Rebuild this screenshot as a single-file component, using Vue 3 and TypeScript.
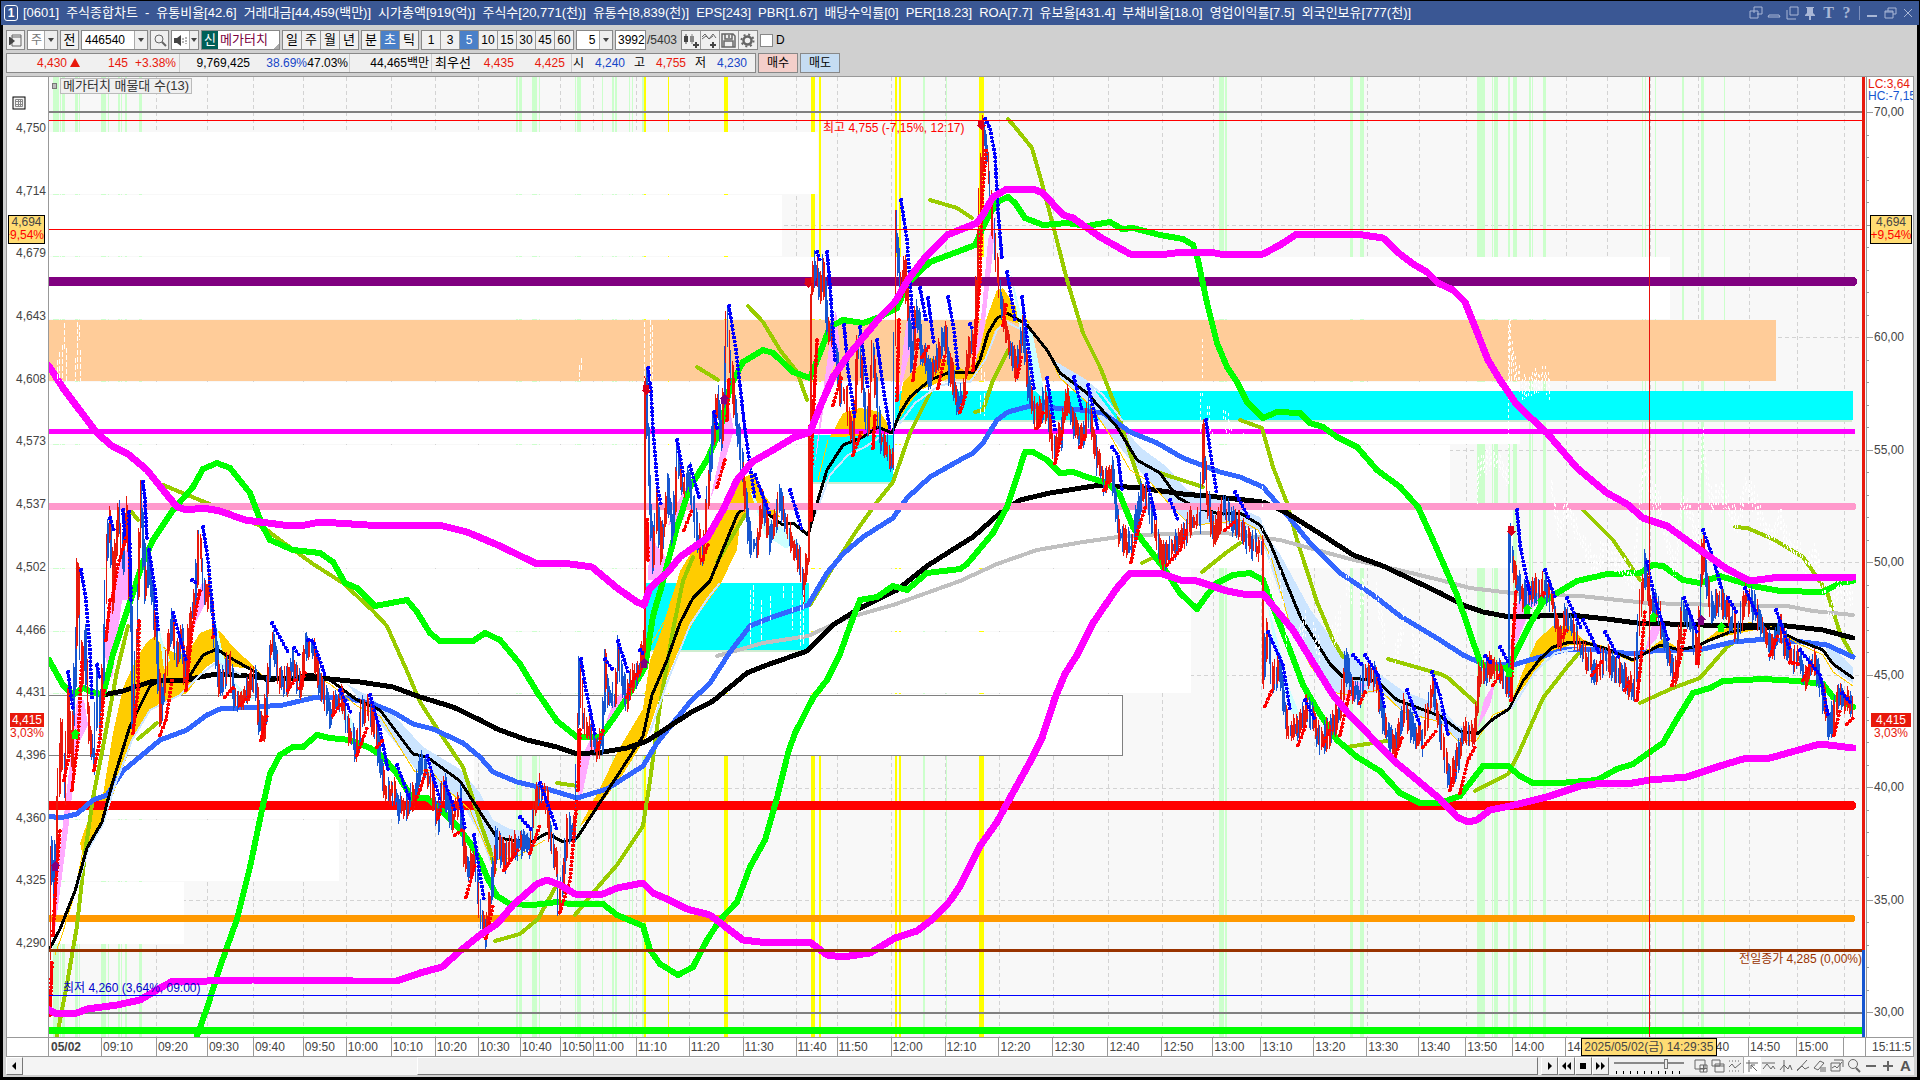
<script setup lang="ts">
import { computed, ref } from 'vue'

interface Stripe { x: number; w: number; c?: string }
interface Line { c: string; w: number; pts: string }

const titleParts = [
  '[0601]', '주식종합차트', '-', '유통비율[42.6]', '거래대금[44,459(백만)]', '시가총액[919(억)]',
  '주식수[20,771(천)]', '유통수[8,839(천)]', 'EPS[243]', 'PBR[1.67]', '배당수익률[0]', 'PER[18.23]',
  'ROA[7.7]', '유보율[431.4]', '부채비율[18.0]', '영업이익률[7.5]', '외국인보유[777(천)]',
]
const periods = ['일', '주', '월', '년']
const units = ['분', '초', '틱']
const counts = ['1', '3', '5', '10', '15', '30', '45', '60']
const unit = ref('초')
const count = ref('5')
const showD = ref(false)
const zoomLevel = ref(75)

const priceLabels = ['4,750', '4,714', '4,679', '4,643', '4,608', '4,573', '4,537', '4,502', '4,466', '4,431', '4,396', '4,360', '4,325', '4,290']
const percentLabels = ['70,00', '', '60,00', '55,00', '50,00', '45,00', '40,00', '35,00', '30,00']

/* time axis: start position of every label cell */
const times: [number, string][] = [
  [49, '05/02'], [101, '09:10'], [156, '09:20'], [207, '09:30'], [253, '09:40'], [303, '09:50'], [346, '10:00'],
  [391, '10:10'], [435, '10:20'], [478, '10:30'], [520, '10:40'], [560, '10:50'], [593, '11:00'], [636, '11:10'],
  [689, '11:20'], [743, '11:30'], [796, '11:40'], [837, '11:50'], [891, '12:00'], [945, '12:10'], [999, '12:20'],
  [1053, '12:30'], [1108, '12:40'], [1162, '12:50'], [1213, '13:00'], [1261, '13:10'], [1314, '13:20'], [1367, '13:30'],
  [1419, '13:40'], [1466, '13:50'], [1513, '14:00'], [1566, '14:10'], [1607, ''], [1650, ''], [1698, '14:40'],
  [1749, '14:50'], [1797, '15:00'], [1844, ''],
]
const timeColumns = computed(() =>
  times.map(([x], i) => `${(i + 1 < times.length ? times[i + 1][0] : 1866) - x}fr`).join(' '))
const gridX = times.slice(1).map(([x]) => x + 0.5)
const gridY = [225.5, 337.5, 450.5, 562.5, 675.5, 788.5, 900.5]
const minorTicks = Array.from({ length: 41 }, (_, i) => ({ y: 112.5 + i * 22.5, major: i % 5 === 0 }))

const stripes: Stripe[] = [
  [53, 6], [60, 1], [62, 3], [75, 3], [79, 1], [101, 5], [108, 1], [118, 2], [121, 1], [125, 2], [139, 3], [516, 2],
  [519, 3], [532, 5], [539, 1], [575, 1], [577, 4], [602, 1], [612, 2], [615, 2], [629, 1], [632, 1], [642, 2],
  [923, 2], [946, 1], [1219, 5], [1225, 2], [1350, 3], [1360, 4], [1477, 8], [1492, 1], [1494, 4], [1508, 2],
  [1513, 4], [1529, 2], [1532, 1], [1543, 3], [1642, 1], [1645, 1], [1655, 1], [1682, 2], [1701, 3], [1724, 1],
].map(([x, w]) => ({ x, w, c: '#cfc' }))
const yellow: Stripe[] = [[644, 2], [668, 1], [724, 4], [811, 4], [819, 2], [895, 2], [899, 2], [979, 5]].map(([x, w]) => ({ x, w, c: '#ff0' }))

/* volume profile rows: top, height, right edge */
const profile = [
  [132, 62, 818], [195, 61, 782], [257, 62, 1670], [382, 62, 1520], [445, 61, 1450], [507, 61, 1513],
  [569, 62, 1191], [632, 61, 1191], [756, 63, 474], [820, 61, 339], [882, 62, 184],
]

const levels = [
  { y: 281.5, w: 9, c: '#800080', x: 1853 }, { y: 431.5, w: 5, c: '#f0f', x: 1853 },
  { y: 506.5, w: 7, c: '#f9c', x: 1853 }, { y: 805.5, w: 9, c: '#f00', x: 1852 },
  { y: 918.5, w: 7, c: '#f90', x: 1852 },
]

const goldBands = [
  '80,843 90,815 103,795 113,733 123,688 137,657 147,642 155,636 163,647 177,654 187,654 200,633 213,628 221,632 233,647 257,669 233,667 217,660 205,668 187,693 167,700 150,709 133,740 113,795 100,829 83,857',
  '580,826 600,788 620,747 643,709 650,660 667,616 680,571 693,550 713,527 727,503 740,480 753,473 763,493 780,517 763,512 750,508 740,523 737,550 720,585 697,616 680,647 663,688 647,736 623,774 597,809',
  '830,437 843,413 860,408 880,412 892,430 878,428 863,436',
  '897,423 903,383 917,367 930,358 947,360 967,372 980,350 987,317 997,290 1003,288 1013,303 1030,323 1023,325 1007,320 995,330 982,367 973,380 950,378 920,390 907,407',
  '1509,707 1523,671 1537,640 1553,626 1570,626 1583,640 1607,647 1570,645 1550,652 1523,688',
  '1650,648 1663,639 1677,647 1663,648', '1703,642 1717,631 1750,622 1770,627 1730,635',
]
const blueBands = [
  '347,684 370,697 393,714 423,747 440,757 460,769 480,793 493,820 510,829 533,833 533,842 505,856 490,862 480,835 460,800 420,775 393,740',
  '1053,360 1087,380 1117,420 1140,447 1167,467 1187,490 1220,500 1260,517 1270,540 1280,554 1310,609 1340,650 1370,667 1403,691 1440,705 1457,726 1477,727 1477,738 1457,740 1440,722 1403,712 1380,692 1350,695 1330,692 1310,665 1290,625 1272,570 1258,530 1220,523 1190,525 1170,505 1150,482 1130,460 1110,435 1090,405 1060,378',
  '1823,640 1837,652 1853,667 1853,683 1840,675 1830,660',
]
const pinkBands = [
  '53,945 60,850 68,780 77,700 84,700 88,725 78,745 68,830', '103,650 112,590 122,556 130,545 133,600 122,600 112,680',
  '188,650 196,600 203,580 207,600 196,622', '577,810 580,760 590,740 603,744 590,758 583,790', '604,728 614,700 628,688 640,670 624,700',
  '648,580 650,520 656,545 668,560 662,580', '668,525 676,505 690,480 684,520', '710,500 720,455 728,400 734,430 722,470',
  '814,470 822,400 830,340 836,310 840,350 828,380', '898,400 904,340 910,300 918,330 908,360', '972,375 982,310 988,240 996,216 992,260 984,330',
  '1510,650 1514,610 1524,590 1545,598 1530,610 1518,640', '1645,650 1652,625 1664,620 1656,640', '1477,730 1484,700 1496,680 1490,705', '1344,700 1352,680 1366,685 1356,700',
]
const cyanBands = [
  '156,610 162,640 170,660 164,670', '214,612 222,650 228,672 220,668', '750,490 765,515 785,530 800,545 785,548 765,535', '1010,270 1020,310 1032,330 1040,370 1046,400 1036,392 1022,345',
  '1267,600 1280,650 1290,690 1300,715 1292,714 1278,670', '338,700 350,715 358,738 348,735', '232,680 245,692 255,698 245,702', '1826,690 1834,712 1832,722',
]

const lines: Line[] = [
  { c: '#c0c0c0', w: 4, pts: '717,656 763,643 808,636 847,618 893,605 960,581 997,564 1037,550 1083,542 1125,536 1163,534 1225,533 1280,540 1350,559 1403,571 1440,580 1470,588 1520,594 1580,596 1647,603 1720,605 1787,606 1813,611 1853,615' },
  { c: '#36f', w: 5, pts: '49,816 60,818 77,814 93,800 107,795 123,771 147,751 160,740 187,730 207,715 220,709 257,707 283,705 317,697 347,698 373,704 393,712 413,724 433,729 463,743 480,757 493,772 517,782 547,789 577,798 607,789 643,766 657,743 690,702 710,683 730,652 750,626 770,618 808,605 827,573 843,554 863,537 893,518 907,498 930,477 960,460 973,453 983,443 997,420 1008,412 1030,406 1080,410 1103,413 1130,432 1157,443 1183,458 1220,472 1240,477 1263,487 1283,510 1310,543 1340,573 1373,595 1400,616 1440,640 1463,655 1483,664 1513,665 1540,657 1567,649 1587,649 1633,654 1653,651 1703,649 1733,642 1767,639 1803,642 1827,645 1853,657' },
  { c: '#000', w: 5, pts: '103,695 123,691 150,682 167,680 187,680 200,677 217,674 247,676 277,679 320,678 360,682 393,687 420,697 453,707 480,720 497,729 527,740 557,747 577,754 603,752 627,748 647,741 667,728 690,713 713,701 747,673 767,665 807,651 833,625 860,608 897,590 927,566 960,545 973,537 1000,513 1020,500 1050,493 1100,485 1140,488 1183,494 1217,497 1263,502 1287,513 1327,538 1353,555 1383,566 1400,574 1440,593 1463,605 1483,612 1510,617 1570,615 1607,619 1637,623 1703,625 1747,625 1787,626 1823,630 1853,638' },
]

const goldThin = [
  '163,647 177,656 187,654', '257,670 267,680 283,679 310,674 330,684 357,706 380,716 400,748 415,772 430,770 450,792 470,810 490,856 500,860 520,855 545,840',
  '1047,350 1060,378 1090,405 1110,435 1130,470 1150,482 1170,505 1190,525 1220,523 1240,520 1258,530 1272,560 1290,625 1310,665 1330,692 1350,695 1380,690 1403,712 1440,722 1457,740 1477,740 1493,715 1509,708',
  '55,955 62,935 75,893 83,850', '1583,640 1607,650 1633,662 1650,648', '1770,626 1797,643 1823,655 1833,672 1853,686',
  '648,650 665,620 678,580', '818,480 828,440', '900,415 912,390',
]
const paleThin = ['62,925 78,885 88,850 103,824 115,785 132,740 150,710 180,695 200,675 217,662 240,674', '650,732 668,680 690,625 708,598 719,584', '815,515 830,475 848,455 865,447 880,437', '900,423 915,403 940,385 970,382 985,360 997,330 1007,322 1027,333', '1087,382 1103,395 1122,420', '1512,708 1535,672 1555,653 1580,648']
const mainThin = '50,948 60,929 75,891 87,848 102,822 113,781 130,726 150,686 160,681 187,680 203,655 217,649 227,656 257,673 267,681 283,679 310,674 330,680 357,700 380,710 413,754 427,757 460,781 480,812 497,838 520,841 533,841 547,833 563,842 577,838 597,807 623,767 643,736 652,695 667,660 680,623 693,598 710,581 728,537 738,513 750,505 763,510 783,525 793,523 808,535 815,510 827,470 843,445 863,437 878,427 892,433 900,413 910,397 930,380 950,372 973,373 980,360 988,333 997,318 1007,313 1027,325 1047,350 1060,373 1087,393 1117,427 1137,460 1160,473 1177,497 1197,508 1220,514 1240,513 1260,525 1270,543 1300,616 1330,664 1343,677 1377,681 1397,700 1440,716 1460,731 1477,734 1493,719 1509,709 1523,681 1540,659 1553,647 1570,642 1583,642 1607,649 1633,660 1660,645 1680,650 1697,646 1710,640 1730,632 1750,628 1773,628 1797,640 1823,650 1833,664 1853,678'

const olive = [
  '130,510 138,520', '163,485 207,503 263,527 280,540 313,564 343,583 373,611 387,626 407,671 420,702 440,733 463,767 480,822 490,850 495,870',
  '57,1036 67,984 77,926 85,853 93,798 103,747 117,671 128,626', '138,739 157,723', '495,941 520,934 538,919 555,888', '557,783 577,786',
  '575,915 597,888 617,865 643,826 650,781 660,705 673,630 683,581 693,557', '697,367 718,380', '748,306 763,322 780,350 797,372 807,400',
  '717,562 730,540 745,515', '810,605 833,567 857,530 877,502 893,482 910,433 930,393', '930,200 957,208 972,218', '975,412 983,410 992,383 1008,350',
  '1008,119 1015,127 1032,148 1043,187 1055,233 1067,280 1083,333 1100,367 1117,410 1130,453 1140,483', '1160,473 1203,487',
  '1240,420 1262,428 1273,467 1287,503 1297,540 1317,602 1333,640 1343,657', '1142,563 1160,554', '1202,572 1227,552 1240,543', '1347,747 1393,740',
  '1388,659 1440,674 1447,677 1477,704', '1475,791 1508,774 1517,757 1543,698 1567,667 1583,648', '1583,510 1613,540 1640,580',
  '1640,703 1673,688 1700,678 1727,647 1737,640', '1735,527 1747,528 1773,539 1803,557 1827,592 1840,633 1852,655',
]

const green = [
  '49,660 63,685 73,695 83,688 90,691 103,695 113,654 130,602 143,562 153,540 173,510 193,487 203,469 217,463 230,468 250,493 263,527 270,540 277,543 293,550 320,553 333,562 345,583 357,588 375,606 407,600 417,612 430,633 440,641 473,641 485,633 500,640 520,664 537,692 557,721 577,737 600,737 613,719 627,698 645,667 653,616 662,585 677,527 690,487 707,460 720,430 730,387 743,362 763,350 773,353 793,372 810,378 820,353 830,327 843,320 863,323 880,317 897,308 908,283 930,262 957,252 975,245 985,223 997,202 1008,197 1015,203 1025,218 1043,225 1067,223 1087,226 1110,222 1122,229 1133,228 1160,235 1183,239 1193,245 1198,260 1207,303 1217,343 1227,367 1237,382 1247,402 1263,418 1277,412 1300,413 1310,423 1323,427 1337,437 1357,447 1377,470 1400,487 1418,507 1433,540 1457,595 1480,662 1487,668 1508,668 1517,650 1530,624 1543,602 1557,593 1577,581 1607,574 1640,573 1653,565 1663,566 1683,580 1700,583 1720,576 1733,580 1753,586 1780,591 1823,592 1840,583 1853,581',
  '197,1036 208,1005 220,967 237,919 250,867 263,805 270,774 280,755 293,747 303,747 317,735 330,738 350,740 370,748 383,757 397,774 412,798 427,798 440,809 457,826 470,843 480,860 487,877 497,896 510,904 533,905 557,902 570,904 603,904 617,915 643,926 650,950 660,964 678,975 693,967 707,940 720,920 737,902 750,867 765,840 777,798 788,753 795,733 813,698 827,680 840,654 850,626 860,600 877,597 893,586 907,590 927,573 960,569 967,564 993,533 1007,507 1017,477 1025,452 1033,452 1047,460 1060,473 1073,472 1087,477 1107,483 1120,495 1133,527 1142,540 1163,567 1180,593 1197,609 1207,595 1217,583 1233,575 1250,573 1263,580 1273,607 1290,650 1303,685 1320,714 1337,740 1357,757 1380,771 1400,793 1420,803 1440,803 1460,796 1473,779 1483,766 1508,766 1520,776 1533,783 1560,783 1597,780 1617,769 1633,764 1647,754 1663,743 1677,719 1693,693 1710,688 1723,681 1763,679 1797,681 1823,684 1833,697 1853,707',
]
const magenta = [
  '49,366 63,388 78,408 97,433 112,446 128,454 147,470 163,490 177,507 187,510 203,508 220,511 245,520 283,525 305,525 320,522 367,525 443,526 467,532 500,546 537,564 563,563 592,567 617,588 637,602 644,605 650,588 667,573 680,557 707,538 723,510 737,480 752,462 773,450 793,438 810,432 820,407 833,377 847,357 867,333 880,317 895,302 908,280 923,260 947,235 977,223 983,215 993,197 1007,189 1033,189 1043,193 1063,215 1073,218 1100,237 1130,254 1167,254 1183,252 1210,252 1220,254 1263,254 1280,245 1297,234 1330,234 1363,235 1383,238 1400,254 1413,264 1427,272 1438,283 1453,290 1465,302 1475,327 1488,360 1500,380 1517,405 1547,433 1577,468 1607,493 1627,504 1643,518 1667,526 1703,552 1727,569 1750,581 1780,577 1853,577',
  '49,1010 57,1014 77,1013 87,1009 117,1005 140,1000 160,988 173,981 207,981 253,980 353,981 397,981 420,973 442,967 460,951 480,935 497,924 513,905 537,884 547,880 560,885 575,894 603,894 617,888 643,883 653,893 667,899 687,909 710,915 723,925 743,940 760,942 810,942 827,955 843,957 870,953 895,938 917,931 933,919 950,901 960,886 980,846 997,822 1010,798 1030,762 1042,738 1055,698 1065,674 1077,655 1093,623 1117,588 1130,573 1142,574 1160,573 1180,580 1197,581 1227,591 1243,594 1263,594 1293,630 1333,695 1347,712 1393,760 1440,799 1457,817 1468,822 1477,820 1490,810 1510,806 1547,797 1580,786 1603,783 1627,784 1650,780 1687,777 1720,766 1743,759 1770,758 1820,744 1837,746 1853,748',
]

/* turning points of the traded price */
const price = '50,945 51,850 54,900 57,810 62,735 65,790 68,700 72,760 76,640 78,575 82,680 85,640 90,740 94,760 97,670 100,730 104,640 107,550 110,520 113,600 117,530 119,515 123,560 127,510 131,620 133,720 137,640 141,490 145,590 148,560 153,600 157,650 160,720 164,690 168,650 173,625 177,660 182,640 186,685 190,620 195,600 198,545 201,550 205,600 210,590 215,640 220,690 226,670 230,665 235,700 240,700 247,690 255,680 260,725 264,730 270,650 273,640 280,680 287,685 293,660 300,690 305,650 312,645 320,680 330,715 335,700 342,700 350,735 357,750 362,715 368,705 377,740 385,790 392,790 400,808 407,808 415,795 422,762 430,780 438,820 443,785 452,820 460,800 465,860 470,870 475,860 480,910 486,935 492,885 497,840 505,860 515,845 530,845 538,790 545,790 550,830 557,870 559,910 563,880 567,830 575,830 578,720 580,670 583,720 590,730 597,748 602,740 605,665 608,700 615,700 618,650 622,680 627,697 633,680 640,668 644,640 646,385 649,480 653,560 657,500 661,550 668,490 673,530 678,460 683,490 690,480 697,535 703,555 712,440 718,400 722,440 727,315 730,360 736,420 743,470 750,545 757,545 763,500 770,540 780,500 790,540 800,560 803,590 808,560 811,300 815,265 820,290 823,265 828,330 834,340 840,390 847,400 853,445 858,340 864,400 868,430 873,350 880,435 887,450 893,460 896,215 900,290 905,270 911,360 917,310 922,350 930,375 938,360 945,330 950,370 958,400 963,400 968,360 975,330 980,200 983,130 988,160 992,220 998,270 1003,315 1012,355 1017,370 1023,330 1030,400 1037,420 1045,400 1055,455 1062,430 1067,395 1075,430 1083,438 1088,410 1097,460 1105,480 1112,470 1120,535 1132,550 1140,500 1145,490 1155,530 1162,560 1172,550 1180,540 1190,525 1200,520 1203,435 1207,500 1215,535 1223,510 1232,520 1242,530 1252,545 1262,550 1263,680 1267,635 1273,680 1280,672 1288,730 1297,730 1306,710 1313,720 1321,742 1332,730 1341,705 1346,665 1352,690 1360,695 1365,672 1376,680 1385,730 1395,750 1404,705 1412,728 1422,742 1430,700 1433,685 1440,730 1450,780 1458,760 1463,735 1475,730 1480,675 1490,668 1500,672 1508,690 1510,540 1516,580 1525,600 1535,590 1545,585 1552,600 1560,640 1567,615 1577,640 1588,660 1597,675 1605,655 1615,670 1625,680 1634,690 1639,620 1645,565 1650,600 1658,610 1667,650 1675,680 1683,610 1690,620 1698,655 1703,545 1705,570 1712,610 1722,600 1732,625 1740,630 1745,595 1755,610 1760,620 1772,650 1780,625 1790,660 1800,660 1805,680 1815,660 1822,690 1830,730 1837,700 1847,700 1853,710'
  .split(' ').map(p => p.split(',').map(Number))

function buildCandles() {
  let seed = 7
  const rnd = () => (seed = (seed * 16807) % 2147483647) / 2147483647
  let up = ''
  let down = ''
  let ghost = ''
  for (let i = 0; i + 1 < price.length; i++) {
    const [x0, y0] = price[i]
    const [x1, y1] = price[i + 1]
    const n = Math.max(1, Math.round((x1 - x0) / 1.5))
    for (let k = 0; k < n; k++) {
      const x = Math.round(x0 + ((x1 - x0) * k) / n)
      const ya = y0 + ((y1 - y0) * k) / n
      const yb = y0 + ((y1 - y0) * (k + 1)) / n
      const top = Math.round(Math.min(ya, yb) - 4 - rnd() * 14)
      const bottom = Math.round(Math.max(ya, yb) + 4 + rnd() * 12)
      const seg = `M${x + 0.5} ${top}V${bottom}`
      const body = rnd() > 0.3 ? `M${x + 1.5} ${top + 4}V${bottom - 3}` : ''
      if (rnd() < (y1 < y0 ? 0.62 : 0.45)) up += seg + body
      else down += seg + body
      if (x > 1475) {
        const d = x < 1550 ? 205 : 105
        ghost += `M${x + 0.5} ${top - d}V${bottom - d - 6}`
      } else if (x > 1190 && x < 1420 && i % 2 === 0) {
        ghost += `M${x + 0.5} ${top - 85}V${bottom - 90}`
      }
    }
  }
  return { up, down, ghost }
}
const candles = buildCandles()

const blueDots = [
  '68,672 73,710', '81,570 86,600 90,650 92,700', '97,665 100,680', '110,518 114,530', '123,510 125,540', '129,512 131,600', '143,482 145,500 147,540', '149,550 155,590 158,630', '173,613 186,660', '192,580 198,584', '203,527 208,560 215,635',
  '272,623 288,652', '294,648 299,655', '308,640 313,641 325,675', '340,690 352,715', '370,695 380,730 388,770', '397,765 410,800', '427,756 440,800', '445,783 455,810', '460,800 465,830', '474,835 484,900', '520,817 533,832', '540,783 557,830', '581,659 586,690 595,735', '605,659 613,670',
  '618,641 628,672', '640,650 644,655', '648,368 651,390 653,430 658,490 661,505', '677,440 684,478', '690,466 700,500', '714,412 717,428', '729,306 736,350 745,430 755,500', '755,475 770,515', '790,490 802,530', '817,252 820,260', '827,252 830,285 835,360',
  '844,325 848,370 855,420', '860,327 868,390', '877,340 882,380 890,430', '901,200 907,240 912,310 914,330', '920,288 926,320', '928,298 934,345', '948,297 954,330 958,370', '970,324 973,330', '985,119 990,128 995,155 998,210 1002,260', '1007,272 1015,320', '1022,297 1026,330 1034,390', '1047,378 1055,430', '1074,377 1082,410',
  '1088,385 1098,430', '1112,447 1118,455 1122,490', '1146,475 1156,520', '1170,500 1178,520', '1206,420 1210,450 1217,495', '1235,492 1250,520', '1268,632 1283,665 1290,710', '1305,700 1315,720', '1353,655 1362,665', '1365,655 1378,675 1385,710', '1407,690 1420,725', '1432,672 1440,695 1448,735', '1485,656 1492,664', '1500,647 1508,662',
  '1517,510 1520,545 1530,595', '1545,570 1556,600', '1567,598 1582,630', '1583,620 1600,655', '1605,632 1620,660', '1647,562 1655,600 1668,640', '1684,598 1698,635', '1703,530 1712,555 1722,590', '1728,598 1738,615', '1745,588 1757,615', '1776,610 1790,650', '1800,650 1820,675 1828,715', '1842,693 1850,702',
]
const redDots = [
  '50,1015 52,960', '53,935 56,880 60,830', '64,780 70,750', '72,790 78,740 82,660', '94,770 100,740 104,690', '106,640 110,600', '112,600 118,565 127,535', '133,733 138,690 139,620', '160,735 166,720 172,680', '186,690 192,630 200,590', '213,637 215,640', '225,697 233,688', '240,705 250,695', '261,740 267,715', '288,690 295,680', '300,688 305,672',
  '333,715 340,705', '357,755 368,725', '377,747 383,740', '412,808 420,790 426,770', '438,818 443,800', '455,835 462,830', '466,897 475,865', '486,938 493,905', '504,870 518,850', '530,853 540,825', '560,912 570,880 577,800', '578,790 580,730', '597,750 603,730', '627,697 633,680 640,670', '647,520 648,560',
  '684,530 692,510', '702,560 708,545', '717,487 725,460', '727,420 729,380', '811,520 812,440 817,340', '833,405 842,375', '853,455 862,430', '873,448 875,415', '897,400 899,320', '913,380 918,340', '922,357 930,345', '938,388 945,355', '960,412 967,390', '973,370 980,280 982,200 986,150', '1003,325 1006,305', '1017,377 1022,355', '1037,428 1044,410', '1055,463 1063,430',
  '1080,447 1085,435', '1104,490 1108,480', '1131,562 1138,530 1146,505', '1167,565 1180,550 1187,530', '1225,530 1237,520', '1265,706 1272,690', '1298,745 1306,725', '1323,745 1330,730', '1340,735 1350,690', '1360,703 1366,690', '1395,757 1403,735', '1423,747 1437,730', '1450,790 1455,770', '1460,793 1468,760 1476,745', '1493,685 1500,675',
  '1511,700 1513,640 1516,590', '1540,600 1546,590', '1562,637 1567,630', '1592,675 1603,660', '1625,690 1630,680', '1637,700 1641,660 1645,610', '1672,685 1680,660 1685,630', '1697,663 1701,645', '1770,655 1778,635', '1790,662 1798,664', '1803,680 1810,665', '1834,735 1840,710', '1847,724 1853,718',
]
const markers = [
  { x: 646, y: 390, c: '#d9001b', d: true }, { x: 808, y: 283, c: '#d9001b', d: true }, { x: 981, y: 125, c: '#d9001b', d: true }, { x: 1511, y: 531, c: '#d9001b', d: true },
  { x: 724, y: 399, c: '#800080' }, { x: 55, y: 866, c: '#800080' }, { x: 644, y: 663, c: '#800080' }, { x: 1701, y: 620, c: '#800080' },
  { x: 75, y: 734, c: '#0f0' }, { x: 1527, y: 609, c: '#0f0' }, { x: 1541, y: 601, c: '#0f0' }, { x: 1509, y: 672, c: '#0f0' }, { x: 1653, y: 617, c: '#0f0' }, { x: 1721, y: 627, c: '#0f0' },
]
const ghostMarks = 'M57.5 360V381M59.5 352V381M62.5 345V381M64.5 323V350M66.5 348V381M75.5 358V381M77.5 322V370M79.5 325V340M80.5 350V381M579.5 365V381M581.5 358V372M644 322V381M650.5 320V381M652.5 325V381M1509.5 320V381M1511.5 355V381M1514.5 375V381M981.5 368V381M984.5 372V416M980.5 395V416M750.5 590V645M753.5 585V610M761.5 600V640M770.5 596V620M783.5 586V600M792.5 586V630M800.5 600V646M803.5 590V646'
</script>

<template>
  <main class="window">
    <header class="titlebar">
      <span class="badge">1</span>
      <h1 class="title"><span v-for="t in titleParts" :key="t">{{ t }}</span></h1>
      <nav class="winctl" aria-label="창 제어">
        <button aria-label="연결"><svg viewBox="0 0 14 14"><path d="M5 1h8v7H5zM1 5h8v7H1z" /><path class="bg" d="M2 7h6v4H2z" /></svg></button>
        <button aria-label="내리기"><svg viewBox="0 0 14 14"><path d="M1 11l1-2h10l1 2z" /></svg></button>
        <button aria-label="복사"><svg viewBox="0 0 14 14"><path d="M5 1h8v8H5zM2 4v9h9" /></svg></button>
        <button aria-label="고정"><svg viewBox="0 0 14 14"><path class="fill" d="M3 1h8v1h-1v5l2 2v1H8v4H6v-4H2V9l2-2V2H3z" /></svg></button>
        <button class="glyph" aria-label="글꼴">T</button>
        <button class="glyph" aria-label="도움말">?</button>
        <i></i>
        <button aria-label="최소화"><svg viewBox="0 0 14 14"><path class="fill" d="M2 9h10v2H2z" /></svg></button>
        <button aria-label="복원"><svg viewBox="0 0 14 14"><path d="M5 5V2h8v6h-3M2 5h8v7H2zM2 6h8" /></svg></button>
        <button aria-label="닫기"><svg viewBox="0 0 14 14"><path d="M3 3l8 8M11 3l-8 8" /></svg></button>
      </nav>
    </header>

    <section class="body">
      <div class="toolbar">
        <button class="tb" aria-label="메뉴"><svg viewBox="0 0 17 17" class="ic"><path d="M5 3h9v11H5zM5 5h9" /><path class="k" d="M3 5l5 4-5 4zM2 5h1v8H2z" /></svg></button>
        <div class="combo market"><select aria-label="시장"><option>주</option></select><b></b></div>
        <button class="tb ko">전</button>
        <div class="combo code"><input aria-label="종목코드" value="446540"><b></b></div>
        <button class="tb" aria-label="검색"><svg viewBox="0 0 17 17" class="ic"><circle cx="8" cy="7" r="4" /><path d="M11 10l4 4" stroke-width="2" /></svg></button>
        <div class="combo sound"><button aria-label="소리"><svg viewBox="0 0 17 17" class="ic"><path class="k" d="M2 6h3l4-3v11l-4-3H2z" /><path d="M11 6v5M14 5v7" stroke-dasharray="2 1" /></svg></button><b></b></div>
        <div class="stock ko"><em>신</em><span>메가터치</span></div>
        <div class="seg ko"><button v-for="p in periods" :key="p">{{ p }}</button></div>
        <div class="seg ko"><button v-for="u in units" :key="u" :class="{ on: unit === u }" @click="unit = u">{{ u }}</button></div>
        <div class="seg"><button v-for="c in counts" :key="c" :class="{ on: count === c }" @click="count = c">{{ c }}</button></div>
        <div class="combo n"><select aria-label="간격"><option>5</option></select><b></b></div>
        <input class="bars" aria-label="표시 봉수" value="3992"><span class="total">/5403</span>
        <div class="seg tools">
          <button aria-label="지표 추가"><svg viewBox="0 0 17 17" class="ic"><path class="k" d="M2 4h4v6H2zM3.500 2h1v10h-1z" /><path fill="#888" stroke="none" d="M8 4h4v6H8zM9.500 2h1v10h-1z" /><path class="k" d="M13 10h2v2h2v2h-2v2h-2v-2h-2v-2h2z" /></svg></button>
          <button aria-label="선 추가"><svg viewBox="0 0 17 17" class="ic"><path d="M1 5l3-3 4 5 4-5 3 4M1 7l4-3 3 3 4-3" /><path class="k" d="M11 10h2v2h2v2h-2v2h-2v-2H9v-2h2z" /></svg></button>
          <button aria-label="저장"><svg viewBox="0 0 17 17" class="ic"><path d="M2 2h11l2 2v11H2zM5 2v5h7V2M4 15V9h9v6M9 3v3" stroke-width="1.500" /></svg></button>
          <button aria-label="설정"><svg viewBox="0 0 17 17" class="ic"><circle cx="8.500" cy="8.500" r="4" stroke-width="2.500" /><circle cx="8.500" cy="8.500" r="6" stroke-width="2" stroke-dasharray="2 2.700" /></svg></button>
        </div>
        <label class="chk"><input v-model="showD" type="checkbox">D</label>
      </div>

      <div class="quote">
        <div class="quotes">
          <div class="q q1"><span class="r">4,430</span><i class="tri"></i><span class="r w48">145</span><span class="r w48">+3.38%</span></div>
          <div class="q q2"><span class="w64">9,769,425</span><span class="b w58">38.69%</span><span class="w40">47.03%</span></div>
          <div class="q q3"><span>44,465백만</span></div>
          <div class="q q4"><span class="ko">최우선</span><span class="r w42">4,435</span><span class="r w50">4,425</span></div>
          <div class="q q5"><span>시</span><span class="b w40">4,240</span><span class="k1">고</span><span class="r w40">4,755</span><span class="k1">저</span><span class="b w40">4,230</span></div>
        </div>
        <button class="buy">매수</button><button class="sell">매도</button>
      </div>

      <div class="chart">
        <aside class="axis left">
          <svg class="tableicon" viewBox="0 0 14 14"><rect x="1" y="1" width="12" height="12" fill="#f4f4f4" stroke="#000" /><path d="M3.500 3.500h7v7h-7zM3.500 5.500h7M3.500 8.500h7M6.500 3.500v7M8.500 3.500v7" fill="none" stroke="#888" /></svg>
          <div class="labels"><span v-for="p in priceLabels" :key="p">{{ p }}</span></div>
          <div class="cursor"><div>4,694</div><div class="red"><span>+9,54%</span></div></div>
          <div class="last"><div>4,415</div><div class="red"><span>3,03%</span></div></div>
        </aside>

        <div class="plot">
          <svg class="canvas" viewBox="49 77 1817 960" preserveAspectRatio="none" shape-rendering="crispEdges">
            <rect x="49" y="77" width="1817" height="960" fill="#f8f8f8" />
            <path v-for="x in gridX" :key="'x' + x" :d="`M${x} 77V1037`" class="grid" />
            <path v-for="y in gridY" :key="'y' + y" :d="`M49 ${y}H1862`" class="grid" />
            <rect v-for="s in stripes.concat(yellow)" :key="'s' + s.x" :x="s.x" y="77" :width="s.w" height="960" :fill="s.c" />
            <rect v-for="p in profile" :key="'p' + p[0]" x="49" :y="p[0]" :width="p[2] - 49" :height="p[1]" fill="#fff" />
            <rect x="49" y="320" width="1727" height="61" fill="#fc9" />
            <rect x="48" y="694" width="1075" height="62" fill="#fff" />
            <path d="M49 695.500H1122.500V755.500H49" fill="none" stroke="#808080" />
            <g fill="#0ff">
              <rect x="644" y="583" width="165" height="67" />
              <rect x="809" y="435" width="84" height="47" />
              <rect x="895" y="391" width="958" height="29" />
            </g>
            <path d="M644 650.500H809M809 482.500H893M895 421H1852" stroke="#cfeccf" stroke-width="2" />
            <path d="M49 112H1862" stroke="#808080" stroke-width="2" />
            <path d="M49 1013H1862" stroke="#808080" stroke-width="2" />
            <polygon v-for="(p, i) in blueBands" :key="'bb' + i" :points="p" fill="#cce5ff" />
            <polygon v-for="(p, i) in goldBands" :key="'gb' + i" :points="p" fill="#fc0" />
            <polygon v-for="(p, i) in pinkBands" :key="'pb' + i" :points="p" fill="#faf" />
            <polygon v-for="(p, i) in cyanBands" :key="'cb' + i" :points="p" fill="#cff" />
            <path v-for="l in levels" :key="'l' + l.y" :d="`M49 ${l.y}H${l.x}`" :stroke="l.c" :stroke-width="l.w" stroke-linecap="round" />
            <g fill="none" stroke-linejoin="round" stroke-linecap="round">
              <polyline v-for="(p, i) in olive" :key="'o' + i" :points="p" stroke="#9c0" stroke-width="4" />
              <polyline v-for="l in lines" :key="l.c" :points="l.pts" :stroke="l.c" :stroke-width="l.w" />
              <polyline v-for="(p, i) in goldThin" :key="'gt' + i" :points="p" stroke="#fc0" />
              <polyline v-for="(p, i) in paleThin" :key="'pt' + i" :points="p" stroke="#cce5ff" stroke-width="2" />
              <polyline :points="mainThin" stroke="#000" stroke-width="3" />
            </g>
            <path d="M49 506.500H1853" stroke="#f9c" stroke-width="7" />
            <g fill="none" stroke-linejoin="round" stroke-linecap="round">
              <polyline v-for="(p, i) in green" :key="'g' + i" :points="p" stroke="#0f0" stroke-width="6" />
            </g>
            <path :d="candles.ghost" stroke="#fff" stroke-dasharray="3 3" />
            <path :d="candles.down" stroke="#1656d0" fill="none" />
            <path :d="candles.up" stroke="#e8190c" fill="none" />
            <g fill="none" stroke-width="4" stroke-linecap="round" stroke-dasharray="0 4">
              <polyline v-for="(p, i) in blueDots" :key="'bd' + i" :points="p" stroke="#00f" />
              <polyline v-for="(p, i) in redDots" :key="'rd' + i" :points="p" stroke="#f00" />
            </g>
            <g fill="none" stroke-linejoin="round" stroke-linecap="round">
              <polyline v-for="(p, i) in magenta" :key="'m' + i" :points="p" stroke="#f0f" stroke-width="7" />
            </g>
            <path :d="ghostMarks" stroke="#fff" stroke-dasharray="5 2" />
            <path v-for="m in markers" :key="'k' + m.x" :fill="m.c" :d="m.d ? `M${m.x - 3} ${m.y - 5}h6v5h2l-5 5l-5 -5h2z` : `M${m.x - 3} ${m.y + 5}h6v-5h2l-5 -5l-5 5h2z`" />
            <path d="M49 950.500H1862" stroke="#930" stroke-width="3" />
            <path d="M49 995.500H1862" stroke="#00f" />
            <path d="M49 1030.500H1862" stroke="#0f0" stroke-width="7" />
            <path d="M49 120.500H1862M49 229.500H1862" stroke="#f00" />
            <path d="M1649.500 77V1037" stroke="#e8100c" />
            <rect x="1862" y="77" width="3" height="873" fill="#e8190c" />
            <rect x="1862" y="950" width="3" height="87" fill="#1656d0" />
          </svg>
          <div class="legend"><i></i><span>메가터치 매물대 수(13)</span></div>
          <span class="note high">최고 4,755 (-7,15%, 12:17)</span>
          <span class="note low">최저 4,260 (3,64%, 09:00)</span>
          <span class="note close">전일종가 4,285 (0,00%)</span>
        </div>

        <aside class="axis right">
          <svg class="ticks" viewBox="0 77 8 960" preserveAspectRatio="none" shape-rendering="crispEdges"><path v-for="t in minorTicks" :key="t.y" :d="`M0 ${t.y}H${t.major ? 6 : 2}`" stroke="#999" /></svg>
          <div class="lchc"><span class="lc">LC:3,64</span><span class="hc">HC:-7,15</span></div>
          <div class="labels"><span v-for="(p, i) in percentLabels" :key="i">{{ p }}</span></div>
          <div class="cursor"><div>4,694</div><div class="red"><span>+9,54%</span></div></div>
          <div class="last"><div>4,415</div><div class="red"><span>3,03%</span></div></div>
        </aside>

        <div class="corner"></div>
        <div class="timeaxis" :style="{ gridTemplateColumns: timeColumns }">
          <span v-for="t in times" :key="t[0]">{{ t[1] }}</span>
          <div class="timetag">2025/05/02(금) 14:29:35</div>
        </div>
        <div class="corner end">15:11:5</div>
      </div>

      <footer class="bottom">
        <button class="sb" aria-label="왼쪽"><svg viewBox="0 0 14 14"><path d="M9 3v8L5 7z" /></svg></button>
        <div class="track"></div>
        <div class="thumb"></div>
        <div class="play">
          <button class="sb" aria-label="재생"><svg viewBox="0 0 14 14"><path d="M6 3v8l4-4z" /></svg></button>
          <button class="sb" aria-label="뒤로"><svg viewBox="0 0 14 14"><path d="M7 3v8L3 7zM12 3v8L8 7z" /></svg></button>
          <button class="sb" aria-label="정지"><svg viewBox="0 0 14 14"><path d="M4 4h6v6H4z" /></svg></button>
          <button class="sb" aria-label="앞으로"><svg viewBox="0 0 14 14"><path d="M3 3v8l4-4zM8 3v8l4-4z" /></svg></button>
        </div>
        <div class="slide"><input v-model="zoomLevel" type="range" min="0" max="100" aria-label="확대 수준"></div>
        <div class="draw">
          <button aria-label="창 추가"><svg viewBox="0 0 16 16"><path d="M2 2h10v9H2zM7 7h7v7H7zM10.500 7v7M7 10.500h7" /></svg></button>
          <button aria-label="창 겹치기"><svg viewBox="0 0 16 16"><path d="M2 2h8v6H2zM5 6h9v8H5zM5 8h9" /></svg></button>
          <button aria-label="영역"><svg viewBox="0 0 16 16"><path d="M2 3h12M2 13h12" stroke-dasharray="1 2" /><path d="M2 9l3-3 3 4 6-5" /></svg></button>
          <button class="active" aria-label="십자선"><svg viewBox="0 0 16 16"><path d="M2 5h12M5 2v12" /><path d="M7 7l6 6M7 7v4M7 7h4" /></svg></button>
          <button aria-label="가로선"><svg viewBox="0 0 16 16"><path d="M1 5h13M2 11l4-5 4 5 2-3 2 3" /></svg></button>
          <button aria-label="세로선"><svg viewBox="0 0 16 16"><path d="M6 2v12M2 12l4-5 4 4 2-4 2 5" /></svg></button>
          <button aria-label="추세선"><svg viewBox="0 0 16 16"><path d="M2 13L12 2M2 12l5-4 3 3 4-2" /></svg></button>
          <button aria-label="지우개"><svg viewBox="0 0 16 16"><path d="M2 10l6-7 4 2-6 7zM9 9v5M11 9v5M13 9v5" /></svg></button>
          <button aria-label="차트 복사"><svg viewBox="0 0 16 16"><path d="M5 2h9v7M2 5h9v8H2zM3 10l3-2 2 2 5-6" /></svg></button>
          <button aria-label="돋보기"><svg viewBox="0 0 16 16"><circle cx="7" cy="6" r="4.500" /><path d="M10 10l4 4" stroke-width="2" /></svg></button>
          <button aria-label="축소"><svg viewBox="0 0 16 16"><path d="M3 8h10" stroke-width="2" /></svg></button>
          <button aria-label="확대"><svg viewBox="0 0 16 16"><path d="M3 8h10M8 3v10" stroke-width="2" /></svg></button>
          <button class="a" aria-label="자동">A</button>
        </div>
      </footer>
    </section>
  </main>
</template>

<style>
body { margin: 0; background: #000; }
</style>

<style scoped>
* { box-sizing: border-box; }
.window { min-height: 100vh; display: flex; flex-direction: column; background: #000; padding: 1px 1px 3px; font: 12px/16px "Liberation Sans", "Noto Sans CJK KR", sans-serif; color: #000; }
button, input, select { font: inherit; color: inherit; margin: 0; padding: 0; border: 0; background: none; border-radius: 0; min-width: 0; }
.ko { font-size: 13px; }
.titlebar { height: 24px; background: #3a5794; color: #fff; display: flex; align-items: center; padding: 0 3px; white-space: nowrap; }
.badge { width: 14px; height: 16px; border: 1px solid #fff; border-radius: 3px; font-weight: bold; line-height: 14px; text-align: center; margin-right: 5px; }
.title { margin: 0; font-size: 13px; font-weight: normal; display: flex; gap: 7px; flex: 1; overflow: hidden; }
.winctl { display: flex; align-items: center; gap: 3px; }
.winctl button { width: 15px; height: 16px; color: #a9b7d6; }
.winctl svg { width: 14px; height: 14px; display: block; fill: none; stroke: #a9b7d6; stroke-width: 1; }
.winctl .fill { fill: #a9b7d6; stroke: none; }
.winctl .bg { fill: #3a5794; stroke: none; }
.winctl .glyph { font: bold 16px/16px "Liberation Serif", serif; }
.winctl i { width: 1px; height: 14px; background: #7d90bd; margin: 0 2px; }

.body { flex: 1; display: flex; flex-direction: column; background: #d0d0d0; margin: 0 2px; padding: 5px 3px 2px; }
.toolbar { display: flex; align-items: center; height: 20px; gap: 2px; white-space: nowrap; }
.tb, .combo, .seg, .bars { height: 20px; border: 1px solid #888; background: #f0f0f0; flex: none; }
.tb { width: 19px; }
.ic { width: 17px; height: 17px; display: block; fill: none; stroke: #666; }
.ic .k { fill: #444; stroke: none; }
.combo { display: flex; background: #fff; }
.combo select, .combo input { flex: 1; width: 0; appearance: none; padding-left: 3px; background: #fff; outline: 0; }
.combo b { width: 13px; background: #eee; border-left: 1px solid #aaa; display: flex; align-items: center; justify-content: center; }
.combo b::after { content: ""; border: 3px solid transparent; border-top: 4px solid #444; border-bottom: 0; }
.market { width: 31px; color: #777; }
.code { width: 67px; }
.sound { width: 28px; }
.sound b { width: 9px; }
.n { width: 37px; }
.n select { text-align: center; padding-left: 8px; }
.stock { width: 79px; height: 20px; display: flex; border: 1px solid #888; background: linear-gradient(135deg, #fff 94%, #aaa 94%); color: #7a0040; }
.stock em { width: 16px; background: #006058; color: #fff; font-style: normal; line-height: 18px; text-align: center; }
.stock span { margin-left: 2px; line-height: 18px; }
.seg { display: flex; }
.seg button { width: 19px; height: 18px; border-right: 1px solid #999; overflow: hidden; }
.seg button:last-child { width: 18px; border-right: 0; }
.seg .on { background: #4a80c8; color: #fff; }
.bars { width: 31px; background: #fff; padding-left: 2px; }
.total { width: 33px; margin-left: -1px; color: #333; }
.tools { margin-left: -1px; }
.chk { display: flex; align-items: center; gap: 3px; }
.chk input { appearance: none; width: 13px; height: 13px; background: #fff; border: 1px solid #888; }

.quote { display: flex; gap: 2px; margin-top: 3px; height: 20px; white-space: nowrap; }
.quotes { display: flex; width: 750px; border: 1px solid #888; background: #f0f0f0; line-height: 18px; }
.q { display: flex; border-right: 1px solid #ccc; }
.q span { text-align: right; }
.q1 { width: 173px; padding-left: 30px; }
.q2 { width: 170px; padding-left: 6px; }
.q3 { width: 82px; justify-content: flex-end; padding-right: 2px; }
.q4 { width: 140px; padding-left: 3px; }
.q5 { flex: 1; border: 0; padding-left: 1px; }
.w40 { width: 41px; } .w42 { width: 43px; } .w48 { width: 48px; } .w50 { width: 51px; } .w58 { width: 57px; } .w64 { width: 64px; }
.k1 { margin-left: 9px; width: 11px; }
.r { color: #e8190c; } .b { color: #1646c8; }
.tri { border: 5px solid transparent; border-bottom: 9px solid #e8190c; border-top: 0; margin: 4px 0 0 3px; height: 0; }
.buy, .sell { width: 40px; border: 1px solid #888; background: #f4cfca; }
.sell { background: #c5dcf2; }

.chart { flex: 1; margin-top: 3px; display: grid; grid-template-columns: 42px minmax(0, 1fr) 47px; grid-template-rows: minmax(0, 1fr) 19px; border: 1px solid #999; background: #fff; color: #444; min-height: 600px; }
.axis { position: relative; min-height: 0; }
.left { border-right: 1px solid #999; }
.right { border-left: 1px solid #999; overflow: hidden; }
.labels { position: absolute; display: flex; flex-direction: column; justify-content: space-between; }
.labels span { height: 16px; }
.left .labels { top: 43px; bottom: 86px; right: 2px; text-align: right; }
.right .labels { top: 27px; bottom: 17px; left: 7px; }
.ticks { position: absolute; left: 0; top: 0; width: 8px; height: 100%; }
.tableicon { position: absolute; left: 5px; top: 19px; width: 14px; height: 14px; }
.cursor { position: absolute; top: 14.400%; left: 1px; width: 37px; height: 29px; background: #ffdc73; border: 1px solid #000; line-height: 13px; text-align: center; overflow: hidden; }
.right .cursor { left: 3px; width: 42px; }
.red { color: #f00; display: flex; justify-content: flex-end; }
.right .red { justify-content: center; }
.last { position: absolute; top: 66.300%; left: 3px; width: 34px; line-height: 12px; text-align: center; }
.last div:first-child { background: #e8190c; color: #fff; line-height: 14px; }
.right .last { left: 4px; width: 40px; }
.last .red { color: #e8190c; }
.lchc { position: absolute; left: 1px; top: 1px; display: flex; flex-direction: column; line-height: 12px; white-space: nowrap; }
.lc { color: #e8190c; } .hc { color: #1656d0; }

.plot { position: relative; min-height: 0; overflow: hidden; }
.canvas { position: absolute; inset: 0; width: 100%; height: 100%; display: block; }
.grid { stroke: #d3d3d3; stroke-dasharray: 4 3; fill: none; }
.legend { position: absolute; left: 3px; top: 1px; display: flex; align-items: center; gap: 3px; font-size: 13px; }
.legend i { width: 5px; height: 6px; background: #bbb; border: 1px solid #777; }
.legend span { border: 1px solid #bbb; background: #f0f0f0; padding: 0 2px; height: 16px; line-height: 13px; color: #333; }
.note { position: absolute; white-space: nowrap; }
.high { left: 42.600%; top: 43px; color: #f00; }
.low { left: 14px; bottom: 41px; color: #00c; }
.close { right: 4px; bottom: 70px; color: #930; }

.corner, .timeaxis { border-top: 1px solid #999; border-right: 1px solid #999; }
.corner.end { border-right: 0; padding-left: 6px; line-height: 18px; white-space: nowrap; overflow: hidden; }
.timeaxis { display: grid; position: relative; line-height: 18px; }
.timeaxis span { border-left: 1px solid #999; padding-left: 1px; overflow: hidden; }
.timeaxis span:first-child { border: 0; font-weight: bold; padding-left: 2px; }
.timetag { position: absolute; left: 84.350%; top: 0; width: 136px; height: 18px; border: 1px solid #000; background: #ffdc73; line-height: 16px; text-align: center; white-space: nowrap; overflow: hidden; }

.bottom { display: flex; height: 18px; background: #f0f0f0; align-items: stretch; }
.sb { width: 17px; background: #f0f0f0; border: 1px solid; border-color: #fff #777 #777 #fff; }
.sb svg { width: 14px; height: 14px; display: block; }
.track { flex: 395; background: #f4f4f4; }
.thumb { flex: 1123; background: #f0f0f0; border: 1px solid; border-color: #fff #777 #777 #fff; }
.play { display: flex; margin-left: 3px; }
.slide { width: 72px; margin: 0 7px 0 5px; padding-top: 1px; background: repeating-linear-gradient(90deg, #000 0 1px, transparent 1px 7px) 2px 14px / 68px 3px no-repeat; }
.slide input { appearance: none; display: block; width: 70px; height: 11px; background: linear-gradient(#888, #888) 0 4px / 100% 2px no-repeat; }
.slide input::-webkit-slider-thumb { appearance: none; width: 4px; height: 10px; background: #eee; border: 1px solid #777; }
.draw { display: flex; }
.draw button { width: 17px; height: 17px; color: #555; }
.draw svg { width: 16px; height: 16px; display: block; fill: none; stroke: #666; }
.draw .active { background: #fff; box-shadow: -1px -1px #aaa; }
.draw .a { font: bold 15px/16px "Liberation Sans", sans-serif; }
</style>
